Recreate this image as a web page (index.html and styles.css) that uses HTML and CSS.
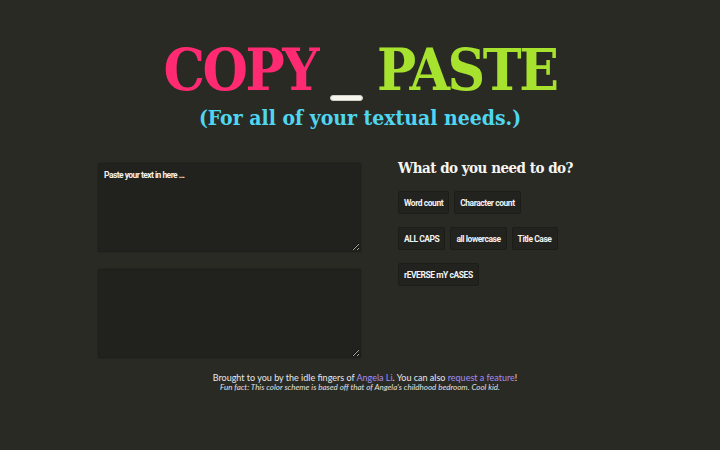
FILE: index.html
```html
<!DOCTYPE html>
<html>
<head>
<meta charset="utf-8">
<link rel="stylesheet" href="styles.css">
</head>
<body>
<header class="masthead">
  <h1 class="title"><span class="copy">COPY</span><span class="under"></span><span class="paste">PASTE</span></h1>
  <p class="tagline">(For all of your textual needs.)</p>
</header>
<main class="panel">
  <div class="inputs">
    <textarea class="box" placeholder="Paste your text in here ..."></textarea>
    <textarea class="box"></textarea>
  </div>
  <div class="actions">
    <h2 class="question">What do you need to do?</h2>
    <div class="row">
      <button class="btn">Word count</button>
      <button class="btn">Character count</button>
    </div>
    <div class="row">
      <button class="btn">ALL CAPS</button>
      <button class="btn">all lowercase</button>
      <button class="btn">Title Case</button>
    </div>
    <div class="row">
      <button class="btn">rEVERSE mY cASES</button>
    </div>
  </div>
</main>
<footer class="foot">
  <p class="credit">Brought to you by the idle fingers of <a href="#">Angela Li</a>. You can also <a href="#">request a feature</a>!</p>
  <p class="fact">Fun fact: This color scheme is based off that of Angela's childhood bedroom. Cool kid.</p>
</footer>
</body>
</html>
```
FILE: styles.css
```css
html, body {
  margin: 0;
  padding: 0;
}
body {
  background: #2a2a25;
  width: 720px;
  height: 450px;
  overflow: hidden;
  font-family: "Open Sans", "Liberation Sans", sans-serif;
  color: #eee;
}
.masthead {
  text-align: center;
  padding-top: 36px;
}
.title {
  margin: 0;
  font-family: "DejaVu Serif Condensed", "DejaVu Serif", serif;
  font-weight: bold;
  font-size: 58px;
  line-height: 68px;
  letter-spacing: -2.5px;
  display: flex;
  justify-content: center;
  align-items: baseline;
}
.copy { color: #ff2a72; }
.paste { color: #a6e22e; }
.under {
  display: inline-block;
  align-self: flex-end;
  width: 33px;
  height: 6px;
  background: #f6f6ee;
  border: 1px solid #cfcfc6;
  box-sizing: border-box;
  border-radius: 3px;
  margin: 0 14px 3px 13px;
}
.tagline {
  margin: 0;
  font-family: "DejaVu Serif Condensed", "DejaVu Serif", serif;
  font-weight: bold;
  font-size: 21px;
  color: #4fd6f0;
  line-height: 28px;
}
.panel {
  display: grid;
  grid-template-columns: 263px 224px;
  column-gap: 37px;
  justify-content: center;
  margin-top: 31px;
}
.inputs {
  display: flex;
  flex-direction: column;
  gap: 17px;
}
.box {
  box-sizing: border-box;
  width: 263px;
  height: 89px;
  background: #21211e;
  border: 1px solid #1e1e1b;
  box-shadow: 0 0 2px rgba(0,0,0,0.35);
  border-radius: 2px;
  color: #eee;
  padding: 6px 5px;
  font-family: "Roboto", "Liberation Sans", sans-serif;
  font-size: 8.5px;
  letter-spacing: -0.55px;
  font-weight: bold;
  resize: vertical;
  outline: none;
}
.box::placeholder {
  color: #f2f2f2;
  opacity: 1;
}
.question {
  margin: -6px 0 12px 0;
  font-family: "DejaVu Serif Condensed", "DejaVu Serif", serif;
  font-weight: bold;
  font-size: 15px;
  letter-spacing: -0.5px;
  line-height: 22px;
  color: #f6f6f0;
}
.row {
  display: flex;
  gap: 5px;
  margin-bottom: 13px;
}
.btn {
  background: #22221f;
  border: 1px solid #1c1c19;
  border-radius: 2px;
  color: #f2f2f2;
  font-family: "Roboto", "Liberation Sans", sans-serif;
  font-weight: bold;
  font-size: 8.5px;
  letter-spacing: -0.45px;
  height: 23px;
  padding: 0 5px;
  cursor: pointer;
}
.foot {
  text-align: center;
  margin-top: 14px;
  font-family: "Lato", "Liberation Sans", sans-serif;
  color: #e8e8e8;
}
.credit {
  margin: 0;
  padding-left: 10px;
  font-size: 9px;
  line-height: 11px;
}
.credit a {
  color: #a58cf0;
  text-decoration: none;
}
.fact {
  margin: 0;
  font-size: 8px;
  line-height: 9px;
  font-style: italic;
  color: #e0e0e0;
}
```
